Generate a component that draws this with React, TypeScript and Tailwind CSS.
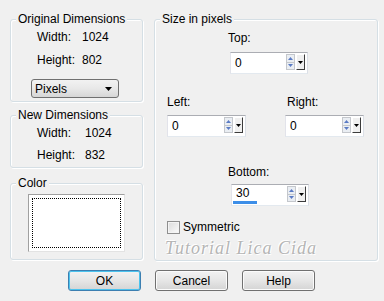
import React from 'react';

const groupBox = 'border border-[#d5dfe5] rounded-[3px] shadow-[inset_1px_1px_0_#fff,1px_1px_0_#fff]';

const GroupTitle: React.FC<{ label: string }> = ({ label }) => (
  <div className="-mt-[8px] ml-[5px] px-[2px] w-fit bg-[#f0f0f0] leading-[14px]">{label}</div>
);

const SpinBox: React.FC<{ value: string; width: string; active?: boolean }> = ({ value, width, active }) => (
  <div className={`${width} h-[22px] flex items-start bg-white border border-[#abadb3] border-r-[#dbdfe6] border-b-[#e3e9ef] border-l-[#e2e3ea]`}>
    <div className="flex-1 h-full flex flex-col">
      <div className="flex-1 flex items-center pl-[4px] leading-[14px]">{value}</div>
      {active && <div className="ml-[1px] mb-[1px] w-[24px] h-[3px] bg-[#3c8ee8]" />}
    </div>
    <div className="mt-[1px] flex flex-col w-[9px] h-[16px]">
      <div className="flex-1 flex items-center justify-center border border-[#c4c7cc] bg-[#eaeef3]">
        <svg width="5" height="3" viewBox="0 0 5 3"><path d="M0 3 L2.5 0 L5 3 Z" fill="#5a7bc4" /></svg>
      </div>
      <div className="flex-1 flex items-center justify-center border border-t-0 border-[#c4c7cc] bg-[#eaeef3]">
        <svg width="5" height="3" viewBox="0 0 5 3"><path d="M0 0 L2.5 3 L5 0 Z" fill="#5a7bc4" /></svg>
      </div>
    </div>
    <div className="mt-[1px] ml-[1px] mr-[2px] w-[9px] h-[16px] flex items-center justify-center bg-[#f0f0f0] border border-t-white border-l-white border-r-[#3c3c3c] border-b-[#3c3c3c]">
      <svg width="5" height="3" viewBox="0 0 5 3"><path d="M0 0 L2.5 3 L5 0 Z" fill="#000" /></svg>
    </div>
  </div>
);

const DialogButton: React.FC<{ label: string; isDefault?: boolean }> = ({ label, isDefault }) => (
  <button
    className={`w-[73px] h-[21px] rounded-[3px] border leading-[14px] bg-gradient-to-b from-[#f2f2f2] via-[#e6e6e6] to-[#d4d4d4] ${
      isDefault ? 'border-[#3c7fb1] shadow-[inset_0_0_0_1px_#4cc3ee]' : 'border-[#707070] shadow-[inset_0_0_0_1px_#fbfbfb]'
    }`}
  >
    {label}
  </button>
);

export default function App() {
  return (
    <div className="w-[384px] h-[301px] bg-[#f0f0f0] text-black text-[12px] font-['Liberation_Sans',Arial,sans-serif] pt-[19px] overflow-hidden">
      <div className="flex items-start pl-[10px]">
        {/* left column */}
        <div className="w-[133px] flex flex-col">
          <div className={`${groupBox} h-[83px]`}>
            <GroupTitle label="Original Dimensions" />
            <div className="mt-[4px] flex pl-[26px] leading-[14px]">
              <span className="w-[45px]">Width:</span>
              <span>1024</span>
            </div>
            <div className="mt-[9px] flex pl-[26px] leading-[14px]">
              <span className="w-[45px]">Height:</span>
              <span>802</span>
            </div>
            <div className="mt-[12px] ml-[20px] w-[88px] h-[19px] rounded-[3px] border border-[#707070] bg-gradient-to-b from-[#f2f2f2] via-[#e8e8e8] to-[#d6d6d6] flex items-center justify-between pl-[3px] pr-[6px] leading-[14px]">
              <span>Pixels</span>
              <svg width="7" height="4" viewBox="0 0 7 4"><path d="M0 0 L3.5 4 L7 0 Z" fill="#000" /></svg>
            </div>
          </div>

          <div className={`${groupBox} h-[53px] mt-[13px]`}>
            <GroupTitle label="New Dimensions" />
            <div className="mt-[4px] flex pl-[26px] leading-[14px]">
              <span className="w-[48px]">Width:</span>
              <span>1024</span>
            </div>
            <div className="mt-[8px] flex pl-[26px] leading-[14px]">
              <span className="w-[48px]">Height:</span>
              <span>832</span>
            </div>
          </div>

          <div className={`${groupBox} h-[77px] mt-[15px]`}>
            <GroupTitle label="Color" />
            <div className="mt-[4px] ml-[17px] w-[97px] h-[58px] bg-white border border-[#a0a0a0] border-r-[#e3e3e3] border-b-[#e3e3e3] p-[3px]">
              <div className="w-full h-full border border-dotted border-black" />
            </div>
          </div>
        </div>

        {/* right column */}
        <div className={`${groupBox} ml-[11px] w-[224px] h-[242px]`}>
          <GroupTitle label="Size in pixels" />
          <div className="mt-[5px] ml-[73px] leading-[14px]">Top:</div>
          <div className="mt-[7px] ml-[75px]">
            <SpinBox value="0" width="w-[78px]" />
          </div>

          <div className="mt-[21px] flex leading-[14px]">
            <span className="ml-[12px] w-[120px]">Left:</span>
            <span>Right:</span>
          </div>
          <div className="mt-[6px] flex">
            <div className="ml-[12px] w-[118px]">
              <SpinBox value="0" width="w-[79px]" />
            </div>
            <SpinBox value="0" width="w-[79px]" />
          </div>

          <div className="mt-[28px] ml-[73px] leading-[14px]">Bottom:</div>
          <div className="mt-[5px] ml-[76px]">
            <SpinBox value="30" width="w-[78px]" active />
          </div>

          <div className="mt-[14px] ml-[12px] flex items-center gap-[3px] leading-[14px]">
            <div className="w-[13px] h-[13px] border border-[#8f8f8f] bg-gradient-to-br from-[#dcdcdc] to-[#fbfbfb] shadow-[inset_0_0_0_1px_#f4f4f4]" />
            <span>Symmetric</span>
          </div>

          <div className="mt-[5px] ml-[10px] italic text-[18px] leading-[18px] tracking-[1px] text-[#b5b5b5] font-['Liberation_Serif',serif] [text-shadow:1px_1px_0_#fff,-1px_-1px_0_#fff]">
            Tutorial Lica Cida
          </div>
        </div>
      </div>

      <div className="mt-[9px] pl-[68px] flex gap-[14px]">
        <DialogButton label="OK" isDefault />
        <DialogButton label="Cancel" />
        <DialogButton label="Help" />
      </div>
    </div>
  );
}
